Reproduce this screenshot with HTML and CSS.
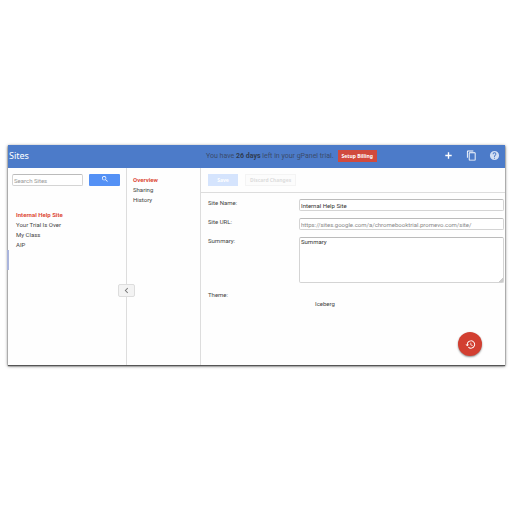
FILE: index.html
```
<!DOCTYPE html>
<html lang="en">
<head>
<meta charset="utf-8">
<title>Sites</title>
<link rel="stylesheet" href="styles.css">
</head>
<body>

<div class="app">
	<header class="topbar">
		<h1>Sites</h1>
		<div class="trial">
			<span>You have <strong>26 days</strong> left in your gPanel trial.</span>
			<button type="button" class="billing">Setup Billing</button>
		</div>
		<div class="actions">
			<button type="button" aria-label="Add site">
				<svg viewBox="0 0 24 24"><path d="M19 13.500h-5.500V19h-3v-5.500H5v-3h5.500V5h3v5.500H19z"/></svg>
			</button>
			<button type="button" aria-label="Copy site">
				<svg viewBox="0 0 24 24"><path d="M16 1H4a2 2 0 0 0-2 2v14h2V3h12zM19 5H8a2 2 0 0 0-2 2v14a2 2 0 0 0 2 2h11a2 2 0 0 0 2-2V7a2 2 0 0 0-2-2zm0 16H8V7h11z"/></svg>
			</button>
			<button type="button" class="help" aria-label="Help">
				<svg viewBox="0 0 24 24"><path d="M12 2a10 10 0 1 0 0 20 10 10 0 0 0 0-20zm1 17h-2v-2h2zm2.07-7.75-.9.92C13.45 12.9 13 13.5 13 15h-2v-.5c0-1.1.45-2.1 1.17-2.83l1.24-1.26A2 2 0 1 0 10 9H8a4 4 0 1 1 7.07 2.25z"/></svg>
			</button>
		</div>
	</header>

	<div class="columns">
		<aside class="sites">
			<form class="search">
				<input type="text" placeholder="Search Sites" aria-label="Search Sites">
				<button type="button" aria-label="Search">
					<svg viewBox="0 0 24 24"><path d="M15.5 14h-.8l-.3-.3a6.5 6.5 0 1 0-.7.7l.3.3v.8l5 5 1.5-1.5zm-6 0a4.5 4.5 0 1 1 0-9 4.5 4.5 0 0 1 0 9z"/></svg>
				</button>
			</form>
			<nav class="list">
				<a href="#" class="current">Internal Help Site</a>
				<a href="#">Your Trial Is Over</a>
				<a href="#">My Class</a>
				<a href="#">AIP</a>
			</nav>
			<button type="button" class="collapse" aria-label="Collapse list">
				<svg viewBox="0 0 24 24"><path d="M15.4 7.4 14 6l-6 6 6 6 1.4-1.4-4.6-4.6z"/></svg>
			</button>
		</aside>

		<nav class="sections list">
			<a href="#" class="current">Overview</a>
			<a href="#">Sharing</a>
			<a href="#">History</a>
		</nav>

		<main class="detail">
			<div class="toolbar">
				<button type="button" class="save" disabled>Save</button>
				<button type="button" class="discard" disabled>Discard Changes</button>
			</div>
			<form class="fields">
				<label for="site-name">Site Name:</label>
				<input type="text" id="site-name" value="Internal Help Site">
				<label for="site-url">Site URL:</label>
				<input type="text" id="site-url" class="readonly" value="https://sites.google.com/a/chromebooktrial.promevo.com/site/" readonly>
				<label for="summary">Summary:</label>
				<textarea id="summary">Summary</textarea>
				<span>Theme:</span>
				<span class="theme">Iceberg</span>
			</form>
			<button type="button" class="fab" aria-label="Recent activity">
				<svg viewBox="0 0 24 24"><path d="M13 3a9 9 0 0 0-9 9H1l3.9 3.9.1.1L9 12H6a7 7 0 1 1 2.1 4.9l-1.4 1.5A9 9 0 1 0 13 3zm-1 5v5l4.3 2.5.7-1.2-3.5-2.1V8z"/></svg>
			</button>
		</main>
	</div>
</div>

</body>
</html>
```
FILE: styles.css
```
*
{
	box-sizing: border-box;
}
body
{
	margin: 0;
	padding: 145px 7px 20px 8px;
	background-color: white;
	color: #444;
	font-family: Roboto, "Noto Sans", sans-serif;
	font-size: 6px;
	line-height: 10px;
}
button, input, textarea
{
	font: inherit;
	color: inherit;
	margin: 0;
}
button
{
	display: flex;
	align-items: center;
	justify-content: center;
	padding: 0;
	border: none;
	background: none;
}
svg
{
	display: block;
	width: 11px;
	height: 11px;
	fill: currentColor;
}
a
{
	color: inherit;
	text-decoration: none;
}
.app
{
	background-color: #fefefe;
	box-shadow: 0 1px 1px #555, 0 1px 3px #555;
}
.topbar
{
	display: grid;
	grid-template-columns: 197px 1fr auto;
	align-items: center;
	height: 23px;
	padding: 0 5px 2px 1px;
	background-color: #4c7bc9;
	color: white;
}
.topbar h1
{
	margin: 0;
	font-family: "Noto Sans", sans-serif;
	font-size: 9px;
	font-weight: normal;
}
.trial
{
	display: flex;
	align-items: center;
	gap: 4px;
	color: #3b4b6b;
	font-size: 7px;
}
.trial strong
{
	color: #2f3b52;
	font-weight: bold;
}
.billing
{
	height: 12px;
	padding: 0 4px;
	background-color: #d14a3d;
	color: white;
	font-family: "Noto Sans", sans-serif;
	font-size: 5px;
	font-weight: bold;
}
.actions
{
	display: flex;
	align-items: center;
	gap: 12px;
}
.help
{
	color: #d3dff3;
}
.columns
{
	display: grid;
	grid-template-columns: 119px 73px 1fr;
	min-height: 197px;
}
.sites
{
	position: relative;
	padding: 6px 6px 0 4px;
	border-right: 1px solid #ddd;
}
/* drawer handle on the window edge */
.sites::before
{
	content: "";
	position: absolute;
	top: 82px;
	left: -1px;
	width: 2px;
	height: 20px;
	background-color: #a9b4dc;
}
.search
{
	display: grid;
	grid-template-columns: 1fr 31px;
	gap: 6px;
	margin-bottom: 24px;
}
.search button
{
	padding-bottom: 2px;
	background-color: #5491f5;
	border-radius: 1px;
	color: white;
}
.search svg
{
	width: 8px;
	height: 8px;
}
input, textarea
{
	width: 100%;
	height: 12px;
	min-width: 0;
	padding: 0 1px;
	border: 1px solid #d4d4d4;
	border-top-color: #bbb;
	border-radius: 2px;
	background-color: white;
}
::placeholder
{
	color: #999;
}
.list a
{
	display: block;
}
.list .current
{
	color: #dd4b39;
	font-weight: bold;
}
.sites .list
{
	padding-left: 4px;
}
.collapse
{
	position: absolute;
	top: 116px;
	right: -9px;
	width: 17px;
	height: 13px;
	border: 1px solid #ddd;
	border-radius: 2px;
	background-color: #f3f3f3;
	color: #777;
}
.sections
{
	padding: 7px 6px 0;
}
.detail
{
	position: relative;
	border-left: 1px solid #ddd;
}
.toolbar
{
	display: flex;
	gap: 7px;
	padding: 6px 7px;
	border-bottom: 1px solid #ddd;
}
.toolbar button
{
	height: 12px;
	font-family: "Noto Sans", sans-serif;
	font-size: 5px;
	font-weight: bold;
}
.save
{
	width: 30px;
	background-color: #d5e4fd;
	color: white;
}
.discard
{
	padding: 0 4px;
	border: 1px solid #f4f4f4;
	background-color: #fcfcfc;
	color: #ddd;
}
.fields
{
	display: grid;
	grid-template-columns: 91px 1fr;
	row-gap: 7px;
	padding: 6px 1px 0 7px;
}
.fields label
{
	line-height: 8px;
}
.fields input, .fields textarea
{
	color: #333;
}
.fields .readonly
{
	color: #888;
}
.fields textarea
{
	display: block;
	height: 46px;
	line-height: 8px;
}
.fields textarea::-webkit-resizer
{
	background: linear-gradient(135deg, transparent 85%, #ccc 85%);
}
.theme
{
	padding: 9px 16px 0;
}
.fab
{
	position: absolute;
	right: 23px;
	bottom: 9px;
	width: 24px;
	height: 24px;
	border-radius: 50%;
	background-color: #d23f31;
	box-shadow: 0 1px 2px #888;
	color: white;
}
```
